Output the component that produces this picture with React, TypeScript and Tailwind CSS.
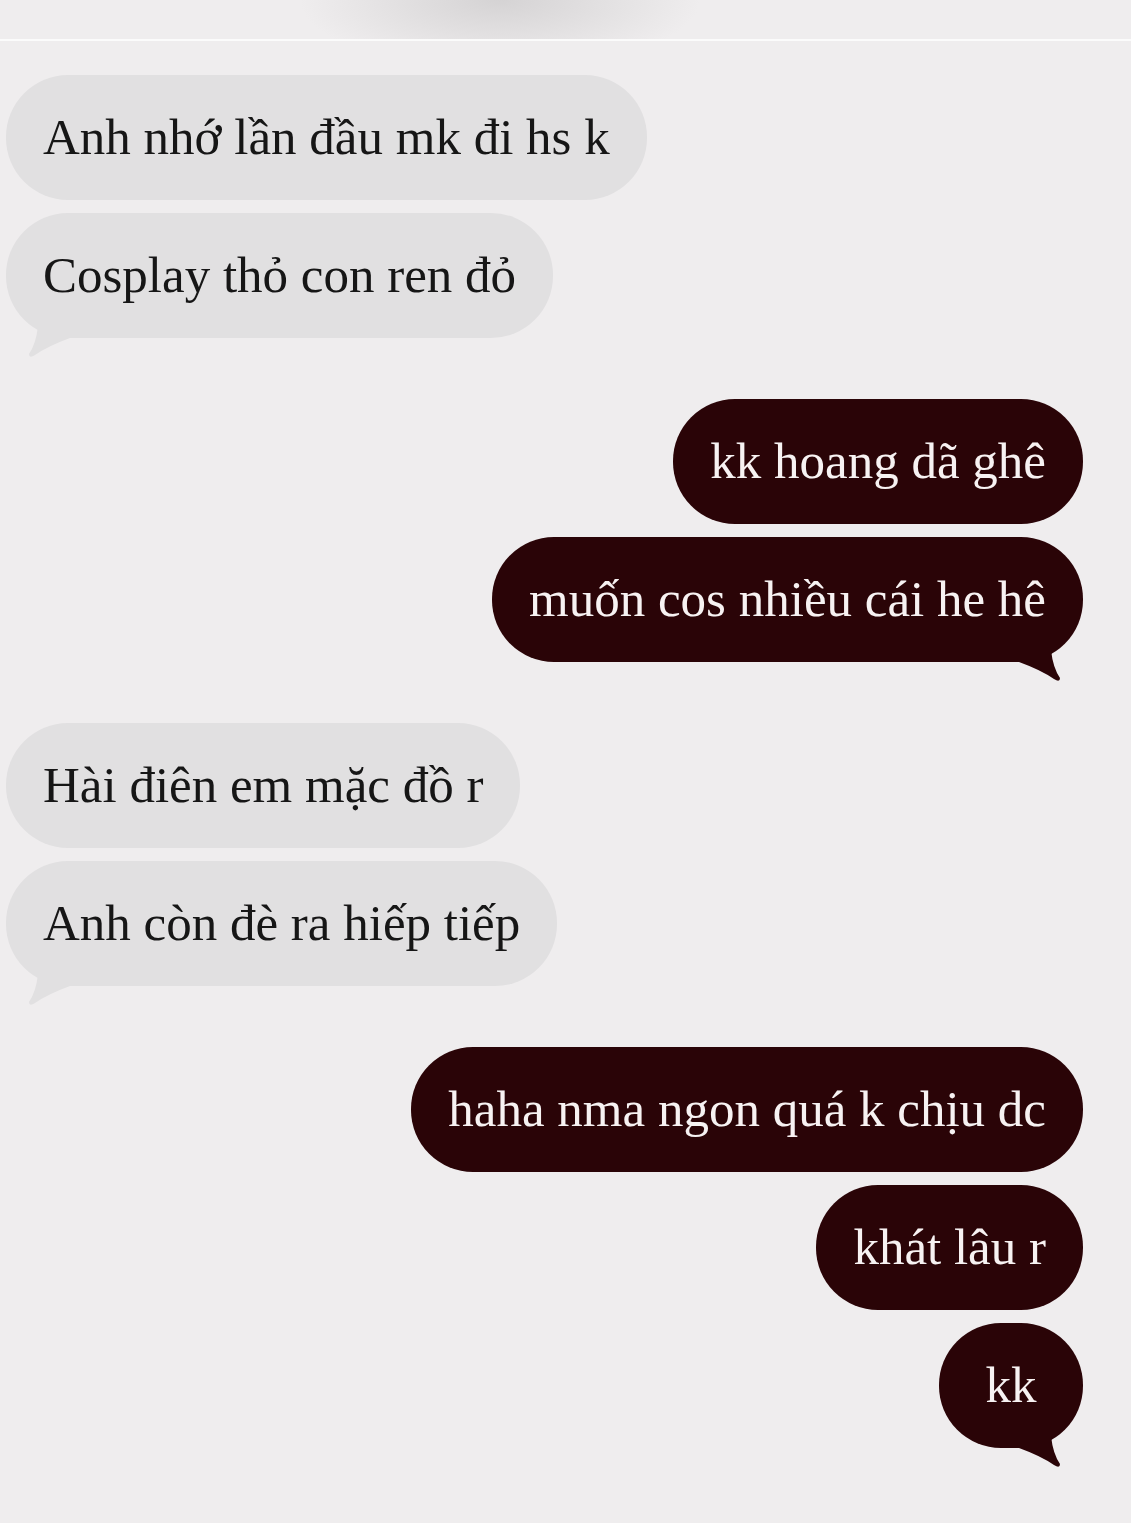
import React from 'react';

type Msg = { text: string; me: boolean; tail?: boolean };

const messages: Msg[][] = [
  [
    { text: 'Anh nhớ lần đầu mk đi hs k', me: false },
    { text: 'Cosplay thỏ con ren đỏ', me: false, tail: true },
  ],
  [
    { text: 'kk hoang dã ghê', me: true },
    { text: 'muốn cos nhiều cái he hê', me: true, tail: true },
  ],
  [
    { text: 'Hài điên em mặc đồ r', me: false },
    { text: 'Anh còn đè ra hiếp tiếp', me: false, tail: true },
  ],
  [
    { text: 'haha nma ngon quá k chịu dc', me: true },
    { text: 'khát lâu r', me: true },
    { text: 'kk', me: true, tail: true },
  ],
];

const Tail = ({ me }: { me: boolean }) =>
  me ? (
    <svg
      className="absolute right-[20px] top-[calc(100%-12px)]"
      width="48"
      height="32"
      viewBox="0 0 48 32"
    >
      <path d="M0 12 L4 12 Q26 20 39 29 Q45 33 45 28 Q38 18 36 0 L0 0 Z" fill="#2a0407" />
    </svg>
  ) : (
    <svg
      className="absolute left-[20px] top-[calc(100%-12px)]"
      width="48"
      height="32"
      viewBox="0 0 48 32"
    >
      <path d="M48 12 L44 12 Q22 20 9 29 Q3 33 3 28 Q10 18 12 0 L48 0 Z" fill="#e1e0e1" />
    </svg>
  );

const Bubble = ({ msg }: { msg: Msg }) => (
  <div className={msg.me ? 'flex justify-end' : 'flex justify-start'}>
    <div
      className={
        'relative h-[125px] min-w-[144px] flex items-center justify-center px-[37px] rounded-[62px] text-[51px] whitespace-nowrap ' +
        (msg.me ? 'bg-[#2a0407] text-[#f7f2f2]' : 'bg-[#e1e0e1] text-[#161616]')
      }
    >
      {msg.text}
      {msg.tail && <Tail me={msg.me} />}
    </div>
  </div>
);

export default function App() {
  return (
    <div
      className="min-h-[1523px] w-[1131px] bg-[#efedee] overflow-hidden"
      style={{ fontFamily: '"Liberation Serif", "Times New Roman", serif' }}
    >
      {/* blurred header */}
      <div className="h-[39px] bg-[radial-gradient(ellipse_200px_70px_at_500px_0px,#d5d3d4,#efedee)]" />
      <div className="h-[2px] bg-[#fbfbfb]" />

      <div className="pt-[34px] pl-[6px] pr-[48px] flex flex-col gap-[61px]">
        {messages.map((group, gi) => (
          <div key={gi} className="flex flex-col gap-[13px]">
            {group.map((m, i) => (
              <Bubble key={i} msg={m} />
            ))}
          </div>
        ))}
      </div>
    </div>
  );
}
